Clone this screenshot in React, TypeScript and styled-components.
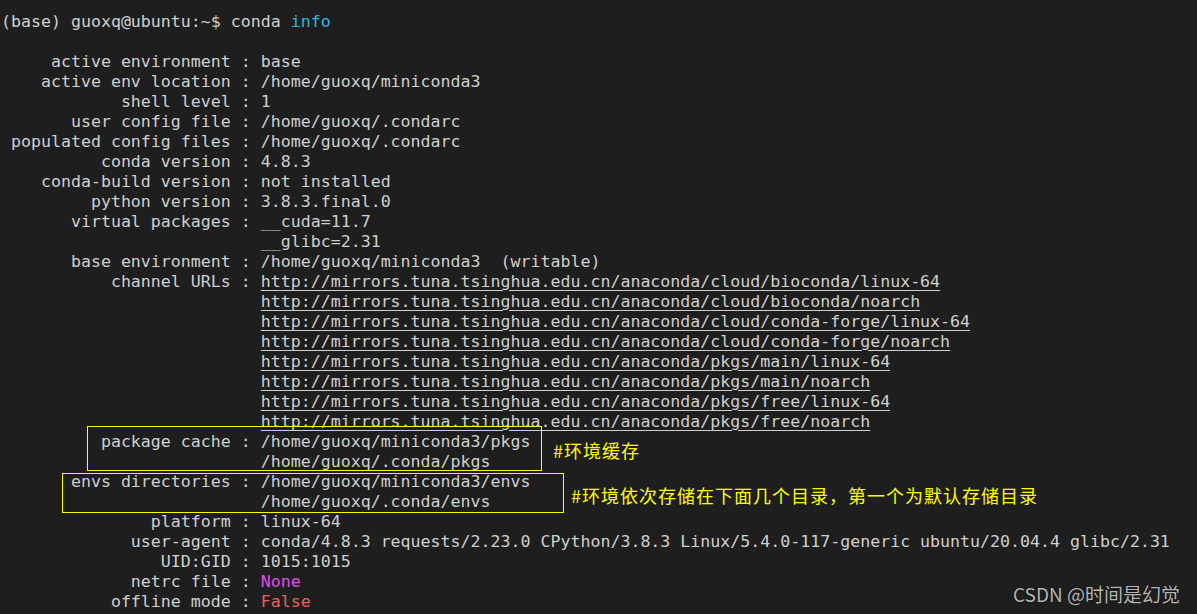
import React from 'react';
import styled, { createGlobalStyle } from 'styled-components';

const Global = createGlobalStyle`
  html, body {
    margin: 0;
    padding: 0;
    background: #1e1e1e;
    overflow: hidden;
  }
`;

const Terminal = styled.div`
  position: relative;
  width: 1197px;
  height: 614px;
  box-sizing: border-box;
  padding: 12px 0 0 1px;
  background: #1e1e1e;
  color: #cfcfcf;
  font-family: "DejaVu Sans Mono", "Liberation Mono", monospace;
  font-size: 16.6px;
  line-height: 20px;
  overflow: hidden;
`;

const Line = styled.div`
  white-space: pre;
  height: 20px;
`;

const Colored = styled.span<{ $tone: 'cyan' | 'magenta' | 'red' }>`
  color: ${(p) => (p.$tone === 'cyan' ? '#29b8db' : p.$tone === 'magenta' ? '#e34ce3' : '#f0605a')};
`;

const Link = styled.span`
  text-decoration: underline;
  text-underline-offset: 3px;
`;

const Mark = styled.div<{ $x: number; $y: number; $w: number; $h: number }>`
  position: absolute;
  left: ${(p) => p.$x}px;
  top: ${(p) => p.$y}px;
  width: ${(p) => p.$w}px;
  height: ${(p) => p.$h}px;
  box-sizing: border-box;
  border: 1px solid #ffff00;
`;

const Note = styled.div<{ $x: number; $y: number }>`
  position: absolute;
  left: ${(p) => p.$x}px;
  top: ${(p) => p.$y}px;
  color: #ffff00;
  font-family: "Noto Sans CJK SC", "Noto Sans", sans-serif;
  font-size: 18px;
  letter-spacing: 1px;
  line-height: 20px;
  white-space: nowrap;
`;

const Watermark = styled.div`
  position: absolute;
  right: 17px;
  bottom: 8px;
  color: #b4b4b4;
  font-family: "Noto Sans CJK SC", "Noto Sans", sans-serif;
  font-size: 19px;
  line-height: 24px;
  text-shadow: 0 0 2px rgba(0, 0, 0, 0.6);
`;

const PAD = ' '.repeat(26);

const channels = [
  'cloud/bioconda/linux-64',
  'cloud/bioconda/noarch',
  'cloud/conda-forge/linux-64',
  'cloud/conda-forge/noarch',
  'pkgs/main/linux-64',
  'pkgs/main/noarch',
  'pkgs/free/linux-64',
  'pkgs/free/noarch',
];

const rows: string[] = [
  '     active environment : base',
  '    active env location : /home/guoxq/miniconda3',
  '            shell level : 1',
  '       user config file : /home/guoxq/.condarc',
  ' populated config files : /home/guoxq/.condarc',
  '          conda version : 4.8.3',
  '    conda-build version : not installed',
  '         python version : 3.8.3.final.0',
  '       virtual packages : __cuda=11.7',
  PAD + '__glibc=2.31',
  '       base environment : /home/guoxq/miniconda3  (writable)',
];

const after: string[] = [
  '          package cache : /home/guoxq/miniconda3/pkgs',
  PAD + '/home/guoxq/.conda/pkgs',
  '       envs directories : /home/guoxq/miniconda3/envs',
  PAD + '/home/guoxq/.conda/envs',
  '               platform : linux-64',
  '             user-agent : conda/4.8.3 requests/2.23.0 CPython/3.8.3 Linux/5.4.0-117-generic ubuntu/20.04.4 glibc/2.31',
  '                UID:GID : 1015:1015',
];

export default function App() {
  return (
    <Terminal>
      <Global />
      <Line>
        (base) guoxq@ubuntu:~$ conda <Colored $tone="cyan">info</Colored>
      </Line>
      <Line />
      {rows.map((r, i) => (
        <Line key={'r' + i}>{r}</Line>
      ))}
      {channels.map((c, i) => (
        <Line key={'c' + i}>
          {i === 0 ? '           channel URLs : ' : PAD}
          <Link>http://mirrors.tuna.tsinghua.edu.cn/anaconda/{c}</Link>
        </Line>
      ))}
      {after.map((r, i) => (
        <Line key={'a' + i}>{r}</Line>
      ))}
      <Line>
        {'             netrc file : '}
        <Colored $tone="magenta">None</Colored>
      </Line>
      <Line>
        {'           offline mode : '}
        <Colored $tone="red">False</Colored>
      </Line>

      <Mark $x={87} $y={426} $w={455} $h={45} />
      <Mark $x={62} $y={473} $w={502} $h={40} />
      <Note $x={553} $y={440}>#环境缓存</Note>
      <Note $x={571} $y={485}>#环境依次存储在下面几个目录，第一个为默认存储目录</Note>
      <Watermark>CSDN @时间是幻觉</Watermark>
    </Terminal>
  );
}
